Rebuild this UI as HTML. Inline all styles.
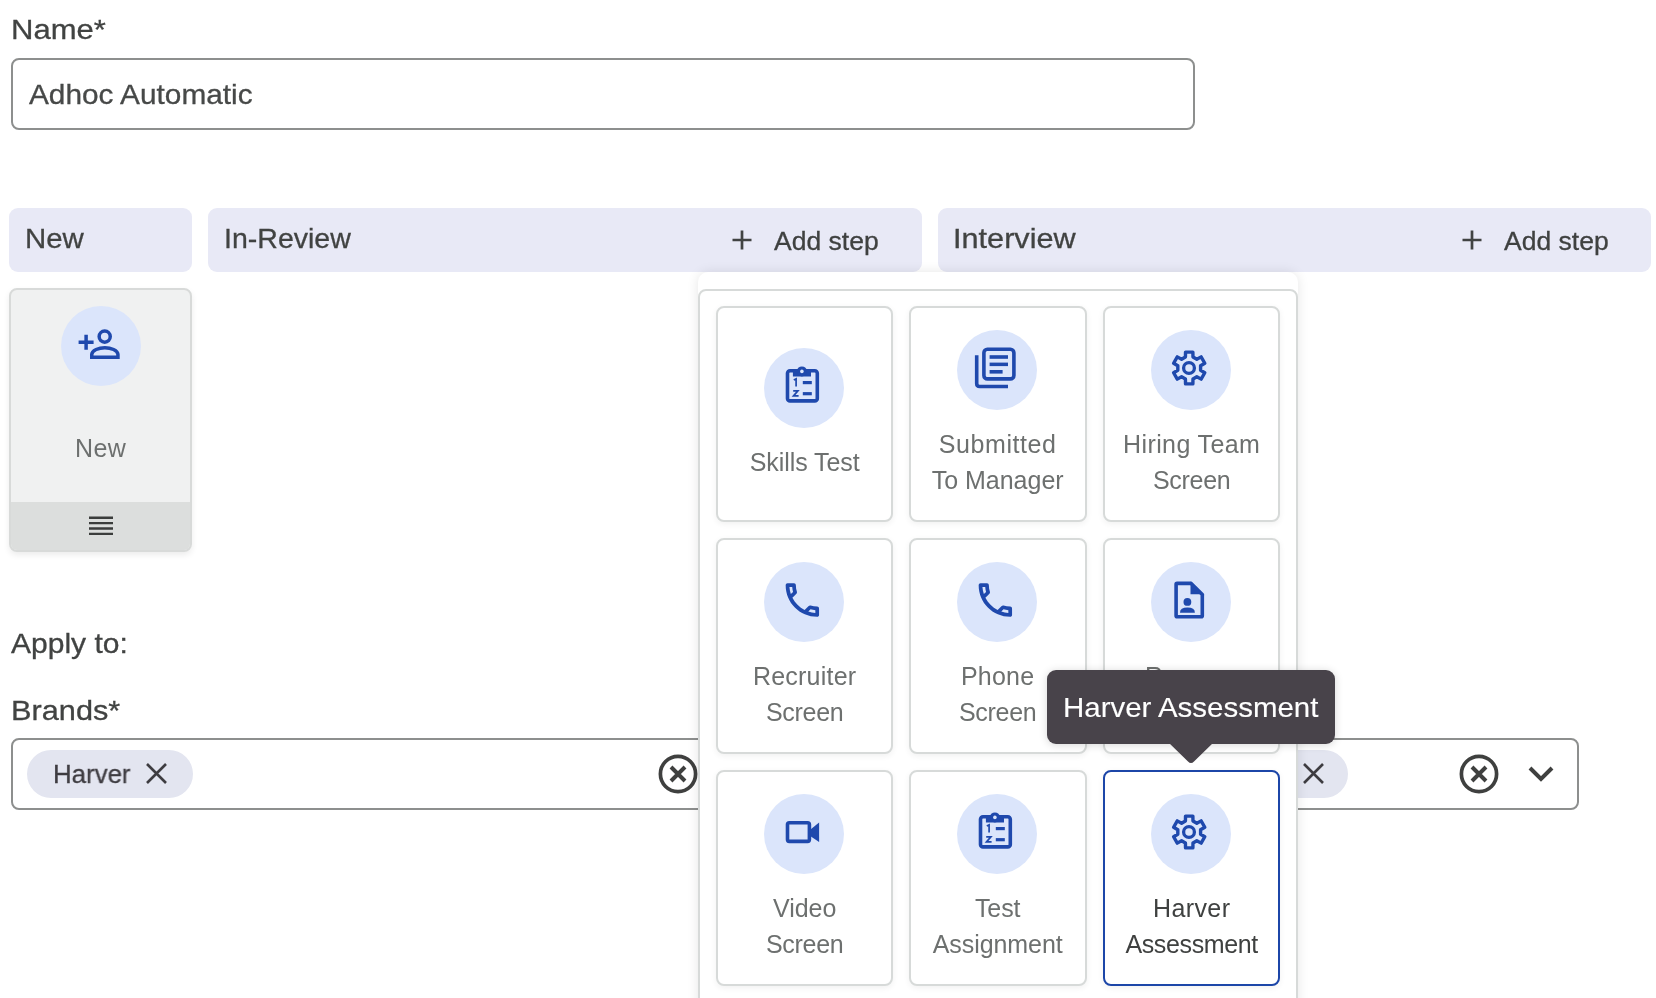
<!DOCTYPE html>
<html><head><meta charset="utf-8">
<style>
*{box-sizing:border-box;margin:0;padding:0}
html,body{width:1656px;height:998px;overflow:hidden;background:#fff}
body{position:relative;font-family:"Liberation Sans",sans-serif;color:#414342}
.a,.lbl{will-change:transform;-webkit-text-stroke-width:0.3px}
.a{position:absolute;white-space:nowrap}
.t28{font-size:28px;line-height:28px}
.t26{font-size:26px;line-height:26px}
.input{position:absolute;border:2px solid #8d8f8e;border-radius:8px;background:#fff}
.hdr{position:absolute;top:208px;height:64px;background:#e8e9f6;border-radius:9px}
.circ{position:absolute;width:80px;height:80px;border-radius:50%;background:#dbe5fb}
.circ svg{position:absolute;left:0;top:0}
.card{position:absolute;width:177.33px;height:216px;border:2px solid #d7dad9;border-radius:8px;background:#fff;box-shadow:0 2px 6px rgba(0,0,0,0.06)}
.card .lbl{position:absolute;left:-10px;right:-10px;text-align:center;font-size:25px;line-height:36px;color:#6d706f;white-space:nowrap;-webkit-text-stroke-width:0}
</style></head>
<body>
<!-- Name -->
<div class="a t28" style="left:10.8px;transform:scaleX(1.108);transform-origin:0 0;top:16.4px">Name*</div>
<div class="input" style="left:11px;top:58px;width:1184px;height:72px"></div>
<div class="a t28" style="left:29.1px;transform:scaleX(1.064);transform-origin:0 0;top:81px;color:#474948">Adhoc Automatic</div>

<!-- Stage headers -->
<div class="hdr" style="left:9px;width:183px"></div>
<div class="a t28" style="left:25px;transform:scaleX(1.05);transform-origin:0 0;top:224.5px">New</div>
<div class="hdr" style="left:208px;width:714px"></div>
<div class="a t28" style="left:223.7px;transform:scaleX(1.019);transform-origin:0 0;top:224.5px">In-Review</div>
<svg class="a" style="left:730px;top:228px" width="24" height="24" viewBox="0 0 24 24"><path d="M12 2.5V21.5M2.5 12H21.5" stroke="#414342" stroke-width="2.7" fill="none"/></svg>
<div class="a t26" style="left:774.3px;top:228px;color:#3f4140;transform:scaleX(1.02);transform-origin:0 0">Add step</div>
<div class="hdr" style="left:938px;width:713px"></div>
<div class="a t28" style="left:953.3px;transform:scaleX(1.095);transform-origin:0 0;top:224.5px">Interview</div>
<svg class="a" style="left:1460px;top:228px" width="24" height="24" viewBox="0 0 24 24"><path d="M12 2.5V21.5M2.5 12H21.5" stroke="#414342" stroke-width="2.7" fill="none"/></svg>
<div class="a t26" style="left:1504.4px;top:228px;color:#3f4140;transform:scaleX(1.02);transform-origin:0 0">Add step</div>

<!-- New card -->
<div class="a" style="left:9px;top:288px;width:183px;height:264px;border:2px solid #d8dad9;border-radius:8px;background:#f0f1f1;overflow:hidden;box-shadow:0 3px 6px rgba(0,0,0,0.08)">
  <div style="position:absolute;left:0;right:0;bottom:0;height:48px;background:#dcdedd"></div>
</div>
<div class="circ" style="left:61px;top:306px">
  <svg width="80" height="80" viewBox="0 0 80 80"><g fill="none" stroke="#1f49ad" stroke-width="3.5"><circle cx="43.7" cy="30.6" r="5.55"/><path d="M30.75 51.35V48.6C30.75 44.2 38 41.75 43.85 41.75C49.7 41.75 56.95 44.2 56.95 48.6V51.35Z"/><path d="M17.6 36.2H32.6M25.1 28.7V43.8"/></g></svg>
</div>
<div class="a" style="left:74.6px;top:435.8px;font-size:25px;line-height:25px;color:#6d706f;letter-spacing:0.4px;-webkit-text-stroke-width:0">New</div>
<svg class="a" style="left:89px;top:516px" width="24" height="20" viewBox="0 0 24 20"><path d="M0 1.8H24M0 7.15H24M0 12.5H24M0 17.85H24" stroke="#3b3d3c" stroke-width="2.4"/></svg>

<!-- Apply to -->
<div class="a t28" style="left:11px;transform:scaleX(1.072);transform-origin:0 0;top:630.4px">Apply to:</div>
<div class="a t28" style="left:11px;transform:scaleX(1.097);transform-origin:0 0;top:696.5px">Brands*</div>

<!-- Brands inputs -->
<div class="input" style="left:11px;top:738px;width:780px;height:72px"></div>
<div class="a" style="left:27px;top:750px;width:166px;height:48px;border-radius:24px;background:#e3e5f0"></div>
<div class="a t26" style="left:52.5px;transform:scaleX(0.993);transform-origin:0 0;top:761px;color:#3e3c41">Harver</div>
<svg class="a" style="left:145px;top:762px" width="23" height="23" viewBox="0 0 23 23"><path d="M2 2L21 21M21 2L2 21" stroke="#3e3c41" stroke-width="2.6"/></svg>
<svg class="a" style="left:658px;top:754px" width="40" height="40" viewBox="0 0 40 40"><circle cx="20" cy="20" r="17.6" fill="none" stroke="#3f403f" stroke-width="3.7"/><path d="M13 13L27 27M27 13L13 27" stroke="#3f403f" stroke-width="4"/></svg>

<div class="input" style="left:806px;top:738px;width:773px;height:72px"></div>
<div class="a" style="left:1180px;top:750px;width:168px;height:48px;border-radius:24px;background:#e3e5f0"></div>
<svg class="a" style="left:1302px;top:762px" width="23" height="23" viewBox="0 0 23 23"><path d="M2 2L21 21M21 2L2 21" stroke="#3e3c41" stroke-width="2.6"/></svg>
<svg class="a" style="left:1459px;top:754px" width="40" height="40" viewBox="0 0 40 40"><circle cx="20" cy="20" r="17.6" fill="none" stroke="#3f403f" stroke-width="3.7"/><path d="M13 13L27 27M27 13L13 27" stroke="#3f403f" stroke-width="4"/></svg>
<svg class="a" style="left:1527px;top:764px" width="28" height="20" viewBox="0 0 28 20"><path d="M3 4L14 15L25 4" fill="none" stroke="#3f403f" stroke-width="4"/></svg>

<!-- Popover -->
<div class="a" style="left:698px;top:272px;width:600px;height:760px;background:#fff;border-radius:10px;box-shadow:0 0 12px rgba(0,0,0,0.10)"></div>
<div class="a" style="left:698px;top:289px;width:600px;height:760px;border:2px solid #d7dad9;border-radius:8px"></div>

<!-- Cards -->
<div class="card" style="left:716px;top:306px">
<div class="circ" style="left:46px;top:40px"><svg width="80" height="80" viewBox="0 0 80 80"><g fill="none" stroke="#1f49ad" stroke-width="3.6"><rect x="23.5" y="22.7" width="29.8" height="30.2" rx="2.5"/></g>
<path d="M28.9 21H47V28.5H28.9Z" fill="#1f49ad"/><circle cx="37.9" cy="23.4" r="5" fill="#1f49ad"/><circle cx="37.9" cy="23.4" r="1.8" fill="#dbe5fb"/>
<path d="M29.8 32.1L32.1 30.9V38.4" fill="none" stroke="#1f49ad" stroke-width="1.7"/>
<path d="M29.2 42.9H33.9L29.5 47.9H34.6" fill="none" stroke="#1f49ad" stroke-width="1.7"/>
<rect x="38.8" y="33" width="9" height="3.2" fill="#1f49ad"/><rect x="38.8" y="44.1" width="9" height="3.2" fill="#1f49ad"/></svg></div>
<div class="lbl" style="top:136px"><span style="letter-spacing:-0.06px">Skills Test</span></div>
</div>
<div class="card" style="left:909.33px;top:306px">
<div class="circ" style="left:46px;top:22px"><svg width="80" height="80" viewBox="0 0 80 80"><g fill="none" stroke="#1f49ad" stroke-width="3.6"><rect x="26.9" y="19.3" width="30" height="29.6" rx="3.5"/><path d="M19.7 25.2V53.5Q19.7 56.5 22.7 56.5H51"/></g>
<rect x="32.6" y="25.2" width="18.4" height="3.6" fill="#1f49ad"/><rect x="32.6" y="32.6" width="18.4" height="3.5" fill="#1f49ad"/><rect x="32.6" y="40" width="13" height="3.6" fill="#1f49ad"/></svg></div>
<div class="lbl" style="top:118px"><span style="letter-spacing:0.57px">Submitted</span><br>To Manager</div>
</div>
<div class="card" style="left:1102.67px;top:306px">
<div class="circ" style="left:46px;top:22px"><svg width="80" height="80" viewBox="0 0 80 80"><path d="M41.98 27.03 L41.87 22.12 L34.53 22.12 L34.42 27.03 L30.59 29.25 L26.28 26.88 L22.61 33.23 L26.81 35.79 L26.81 40.21 L22.61 42.77 L26.28 49.12 L30.59 46.75 L34.42 48.97 L34.53 53.88 L41.87 53.88 L41.98 48.97 L45.81 46.75 L50.12 49.12 L53.79 42.77 L49.59 40.21 L49.59 35.79 L53.79 33.23 L50.12 26.88 L45.81 29.25Z" fill="none" stroke="#1f49ad" stroke-width="3.4" stroke-linejoin="round"/><circle cx="38" cy="38" r="5.4" fill="none" stroke="#1f49ad" stroke-width="3.3"/></svg></div>
<div class="lbl" style="top:118px"><span style="letter-spacing:0.4px">Hiring Team</span><br><span style="letter-spacing:-0.3px">Screen</span></div>
</div>
<div class="card" style="left:716px;top:538px">
<div class="circ" style="left:46px;top:22px"><svg width="80" height="80" viewBox="0 0 80 80"><g transform="translate(16.1,15.8) scale(1.855)"><path fill="#1f49ad" d="M6.54 5c.06.89.21 1.76.45 2.59l-1.2 1.2c-.41-1.2-.67-2.47-.76-3.79h1.51m9.86 12.02c.85.24 1.72.39 2.6.45v1.49c-1.32-.09-2.59-.35-3.8-.75l1.2-1.19M7.5 3H4c-.55 0-1 .45-1 1 0 9.39 7.610 17 17 17 .55 0 1-.45 1-1v-3.49c0-.55-.45-1-1-1-1.240 0-2.450-.2-3.570-.57-.1-.04-.21-.05-.31-.05-.26 0-.51.1-.71.29l-2.2 2.2c-2.83-1.45-5.15-3.76-6.59-6.59l2.2-2.2c.28-.28.36-.67.25-1.02C8.7 6.45 8.5 5.25 8.5 4c0-.55-.45-1-1-1z"/></g></svg></div>
<div class="lbl" style="top:118px"><span style="letter-spacing:0.22px">Recruiter</span><br><span style="letter-spacing:-0.3px">Screen</span></div>
</div>
<div class="card" style="left:909.33px;top:538px">
<div class="circ" style="left:46px;top:22px"><svg width="80" height="80" viewBox="0 0 80 80"><g transform="translate(16.1,15.8) scale(1.855)"><path fill="#1f49ad" d="M6.54 5c.06.89.21 1.76.45 2.59l-1.2 1.2c-.41-1.2-.67-2.47-.76-3.79h1.51m9.86 12.02c.85.24 1.72.39 2.6.45v1.49c-1.32-.09-2.59-.35-3.8-.75l1.2-1.19M7.5 3H4c-.55 0-1 .45-1 1 0 9.39 7.610 17 17 17 .55 0 1-.45 1-1v-3.49c0-.55-.45-1-1-1-1.240 0-2.450-.2-3.570-.57-.1-.04-.21-.05-.31-.05-.26 0-.51.1-.71.29l-2.2 2.2c-2.83-1.45-5.15-3.76-6.59-6.59l2.2-2.2c.28-.28.36-.67.25-1.02C8.7 6.45 8.5 5.25 8.5 4c0-.55-.45-1-1-1z"/></g></svg></div>
<div class="lbl" style="top:118px"><span style="letter-spacing:0.25px">Phone</span><br><span style="letter-spacing:-0.3px">Screen</span></div>
</div>
<div class="card" style="left:1102.67px;top:538px">
<div class="circ" style="left:46px;top:22px"><svg width="80" height="80" viewBox="0 0 80 80"><path d="M25.1 22.4Q25.1 21.4 26.1 21.4H40.2L51.3 32.5V53.8Q51.3 54.8 50.3 54.8H26.1Q25.1 54.8 25.1 53.8Z" fill="none" stroke="#1f49ad" stroke-width="3.6" stroke-linejoin="round"/>
<path d="M39.5 19.6L53.1 33.2V32.2H39.5Z" fill="#1f49ad"/><circle cx="36.4" cy="39.9" r="3.9" fill="#1f49ad"/><path d="M29 50.7Q29 45.6 36.45 45.6Q43.9 45.6 43.9 50.7Z" fill="#1f49ad"/></svg></div>
<div class="lbl" style="top:118px">Resume<br><span style="letter-spacing:-0.3px">Screen</span></div>
</div>
<div class="card" style="left:716px;top:770px">
<div class="circ" style="left:46px;top:22px"><svg width="80" height="80" viewBox="0 0 80 80"><rect x="23.5" y="28.7" width="21.9" height="18.7" rx="1.8" fill="none" stroke="#1f49ad" stroke-width="3.6"/><path d="M46.5 35.4L55.1 28.5V48L46.5 42.2Z" fill="#1f49ad"/></svg></div>
<div class="lbl" style="top:118px">Video<br><span style="letter-spacing:-0.3px">Screen</span></div>
</div>
<div class="card" style="left:909.33px;top:770px">
<div class="circ" style="left:46px;top:22px"><svg width="80" height="80" viewBox="0 0 80 80"><g fill="none" stroke="#1f49ad" stroke-width="3.6"><rect x="23.5" y="22.7" width="29.8" height="30.2" rx="2.5"/></g>
<path d="M28.9 21H47V28.5H28.9Z" fill="#1f49ad"/><circle cx="37.9" cy="23.4" r="5" fill="#1f49ad"/><circle cx="37.9" cy="23.4" r="1.8" fill="#dbe5fb"/>
<path d="M29.8 32.1L32.1 30.9V38.4" fill="none" stroke="#1f49ad" stroke-width="1.7"/>
<path d="M29.2 42.9H33.9L29.5 47.9H34.6" fill="none" stroke="#1f49ad" stroke-width="1.7"/>
<rect x="38.8" y="33" width="9" height="3.2" fill="#1f49ad"/><rect x="38.8" y="44.1" width="9" height="3.2" fill="#1f49ad"/></svg></div>
<div class="lbl" style="top:118px"><span style="letter-spacing:-0.13px">Test</span><br><span style="letter-spacing:-0.07px">Assignment</span></div>
</div>
<div class="card" style="left:1102.67px;top:770px;border-color:#1c46a8">
<div class="circ" style="left:46px;top:22px"><svg width="80" height="80" viewBox="0 0 80 80"><path d="M41.98 27.03 L41.87 22.12 L34.53 22.12 L34.42 27.03 L30.59 29.25 L26.28 26.88 L22.61 33.23 L26.81 35.79 L26.81 40.21 L22.61 42.77 L26.28 49.12 L30.59 46.75 L34.42 48.97 L34.53 53.88 L41.87 53.88 L41.98 48.97 L45.81 46.75 L50.12 49.12 L53.79 42.77 L49.59 40.21 L49.59 35.79 L53.79 33.23 L50.12 26.88 L45.81 29.25Z" fill="none" stroke="#1f49ad" stroke-width="3.4" stroke-linejoin="round"/><circle cx="38" cy="38" r="5.4" fill="none" stroke="#1f49ad" stroke-width="3.3"/></svg></div>
<div class="lbl" style="top:118px;color:#3f4140"><span style="letter-spacing:0.4px">Harver</span><br><span style="letter-spacing:-0.36px">Assessment</span></div>
</div>
<!-- Tooltip -->
<div class="a" style="left:1047px;top:670px;width:288px;height:74px;background:#48434a;border-radius:9px;box-shadow:0 1px 8px rgba(0,0,0,0.16)"></div>
<svg class="a" style="left:1166px;top:742px" width="50" height="23" viewBox="0 0 50 23"><path d="M2 0H48L28 19.5Q25 22.5 22 19.5Z" fill="#48434a"/></svg>
<div class="a t28" style="left:1062.9px;transform:scaleX(1.052);transform-origin:0 0;top:694px;color:#fff;-webkit-text-stroke-width:0.12px">Harver Assessment</div>
</body></html>
